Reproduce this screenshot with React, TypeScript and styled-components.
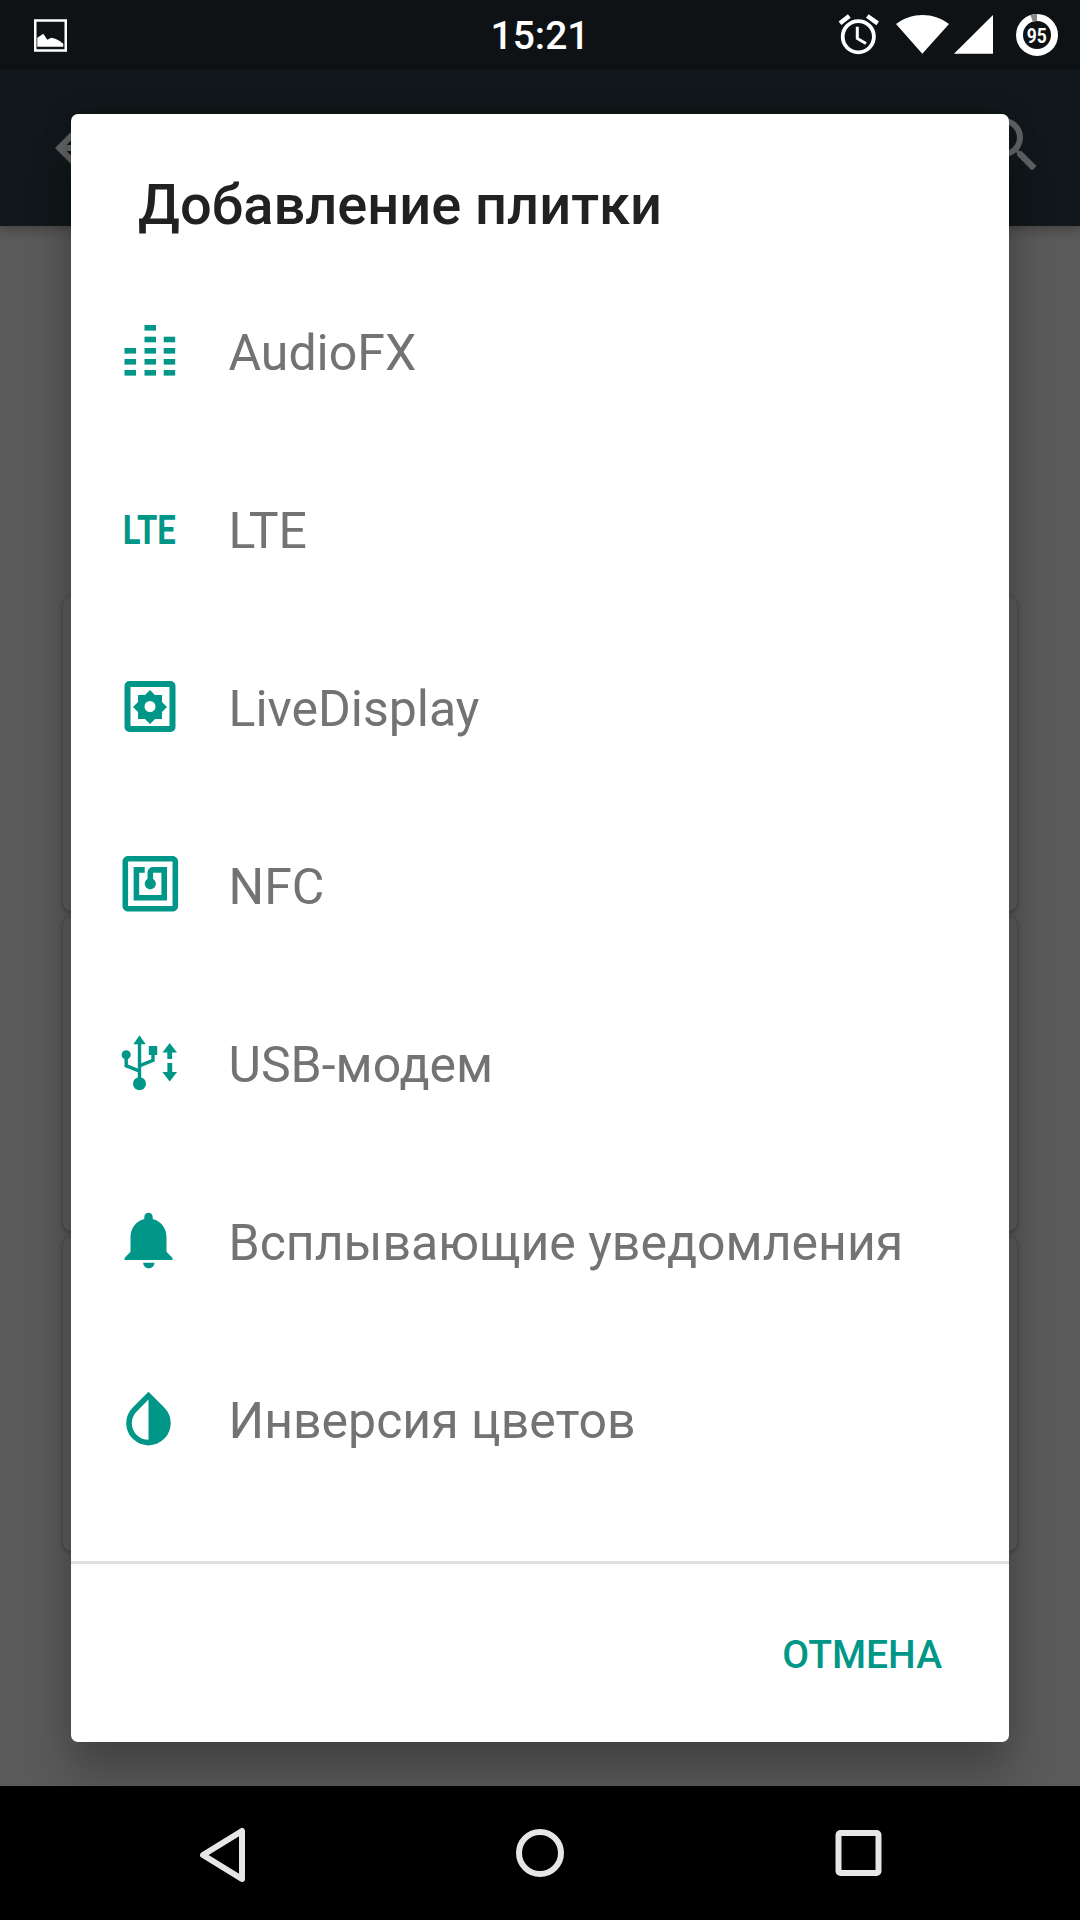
import React from "react";
import styled, { createGlobalStyle } from "styled-components";

const Global = createGlobalStyle`
  html, body { margin: 0; padding: 0; background: #000; }
  * { box-sizing: border-box; }
`;

const Screen = styled.div`
  position: relative;
  width: 1080px;
  height: 1920px;
  display: flex;
  flex-direction: column;
  overflow: hidden;
  font-family: Roboto, "Noto Sans", sans-serif;
  background: #5a5a5a;
`;

const StatusBar = styled.div`
  position: relative;
  height: 69px;
  flex: none;
  background: #0e1214;
  color: #fff;
`;

const StatusIcons = styled.svg`
  position: absolute;
  inset: 0;
  width: 1080px;
  height: 69px;
`;

const Clock = styled.div`
  position: absolute;
  left: 0;
  right: 0;
  top: 14px;
  text-align: center;
  font-size: 39px;
  line-height: 44px;
  font-weight: 500;
`;

const AppBar = styled.div`
  height: 157px;
  flex: none;
  display: flex;
  align-items: center;
  justify-content: space-between;
  padding: 0 33px 0 43px;
  background: #11171a;
  box-shadow: 0 4px 10px rgba(0, 0, 0, 0.25);
  position: relative;
`;

const BarIcon = styled.svg`
  width: 72px;
  height: 72px;
  fill: #5f6263;
  display: block;
`;

const Content = styled.div`
  flex: 1;
  min-height: 0;
  display: flex;
  flex-direction: column;
  gap: 6px;
  padding: 371px 63px 0;
`;

const Card = styled.div`
  height: 314px;
  flex: none;
  border-radius: 8px;
  background: #5b5b5b;
  box-shadow: 0 1px 4px rgba(0, 0, 0, 0.35);
`;

const NavBar = styled.div`
  height: 134px;
  flex: none;
  background: #000;
  position: relative;
  z-index: 3;
`;

const NavIcons = styled.svg`
  width: 1080px;
  height: 134px;
  display: block;
  fill: none;
  stroke: #e6e6e6;
  stroke-width: 6;
  stroke-linejoin: round;
`;

const Dialog = styled.div`
  position: absolute;
  left: 71px;
  top: 114px;
  width: 938px;
  height: 1628px;
  display: flex;
  flex-direction: column;
  background: #fff;
  border-radius: 7px;
  box-shadow: 0 36px 44px rgba(0, 0, 0, 0.22), 0 0 30px rgba(0, 0, 0, 0.12);
  z-index: 2;
`;

const Title = styled.div`
  height: 150px;
  flex: none;
  padding: 55px 0 0 67px;
  font-size: 56px;
  line-height: 72px;
  font-weight: 500;
  color: #212121;
`;

const List = styled.div`
  display: flex;
  flex-direction: column;
  flex: 1;
`;

const Row = styled.div`
  height: 178px;
  flex: none;
  display: flex;
  align-items: center;
  padding-left: 42.5px;
`;

const IconSlot = styled.div`
  width: 72px;
  height: 72px;
  flex: none;
  margin-right: 43px;
  display: flex;
  align-items: center;
  justify-content: center;
  color: #009688;
`;

const Glyph = styled.svg`
  width: 72px;
  height: 72px;
  display: block;
  fill: currentColor;
`;

const LteMark = styled.span`
  display: block;
  font-size: 40px;
  line-height: 72px;
  font-weight: 700;
  transform: scaleX(0.82);
`;

const Label = styled.div`
  font-size: 50px;
  line-height: 60px;
  color: #737373;
  white-space: nowrap;
`;

const Divider = styled.div`
  height: 3px;
  flex: none;
  background: #e0e0e0;
`;

const Footer = styled.div`
  height: 178px;
  flex: none;
  display: flex;
  align-items: flex-start;
  justify-content: flex-end;
  padding: 67px 67px 0 0;
`;

const CancelButton = styled.div`
  font-size: 39px;
  line-height: 48px;
  font-weight: 500;
  color: #009688;
`;

const eq: [number, number][] = [
  [10.5, 31], [10.5, 42], [10.5, 53],
  [30.5, 8], [30.5, 19.7], [30.5, 31], [30.5, 42], [30.5, 53],
  [49.7, 19.7], [49.7, 31], [49.7, 42], [49.7, 53],
];

const rows: { label: string; icon: React.ReactNode }[] = [
  {
    label: "AudioFX",
    icon: (
      <Glyph viewBox="0 0 72 72">
        {eq.map(([x, y]) => (
          <rect key={`${x}-${y}`} x={x} y={y} width="11.5" height="5.6" />
        ))}
      </Glyph>
    ),
  },
  { label: "LTE", icon: <LteMark>LTE</LteMark> },
  {
    label: "LiveDisplay",
    icon: (
      <Glyph viewBox="0 2.5 72 72">
        <path
          fillRule="evenodd"
          d="M15.5 10.5h41a5 5 0 0 1 5 5v41a5 5 0 0 1-5 5h-41a5 5 0 0 1-5-5v-41a5 5 0 0 1 5-5zm1 6v39h39v-39z"
        />
        <path
          fillRule="evenodd"
          d="M36 19.5l5 5h7l0 7 5 5-5 5v7h-7l-5 5-5-5h-7v-7l-5-5 5-5v-7h7zm0 11a5.5 5.5 0 1 0 0 11 5.5 5.5 0 0 0 0-11z"
        />
      </Glyph>
    ),
  },
  {
    label: "NFC",
    icon: (
      <Glyph viewBox="-1.06 0.2 25.9 25.9">
        <path d="M20 2H4c-1.1 0-2 .9-2 2v16c0 1.1.9 2 2 2h16c1.1 0 2-.9 2-2V4c0-1.1-.9-2-2-2zm0 18H4V4h16v16zM18 6h-5c-1.1 0-2 .9-2 2v2.28c-.6.35-1 .98-1 1.72 0 1.1.9 2 2 2s2-.9 2-2c0-.74-.4-1.38-1-1.72V8h3v8H8V8h2V6H6v12h12V6z" />
      </Glyph>
    ),
  },
  {
    label: "USB-модем",
    icon: (
      <Glyph viewBox="0 0 72 72">
        <path d="M25.5 6.3l6.2 9h-12.400z" />
        <path d="M23.8 15h3.4v35h-3.4z" />
        <circle cx="25.5" cy="54.7" r="6.5" />
        <circle cx="12.2" cy="25.8" r="4.6" />
        <path d="M10.5 28h3.4v7.6l13 5.2-1.2 3.2-15.2-6z" />
        <path d="M34.8 17h8.4v9h-8.4z" />
        <path d="M37.3 25h3.4v7.6l-14.2 5.6-1.2-3.2 12-4.7z" />
        <path d="M55.7 14l7.3 9.400h-4.9v6.6h-4.800v-6.600h-4.900z" />
        <path d="M53.400 34h4.800v9h4.900l-7.400 9.500-7.300-9.500h5z" />
      </Glyph>
    ),
  },
  {
    label: "Всплывающие уведомления",
    icon: (
      <Glyph viewBox="0 0 72 72">
        <path d="M34.5 5.700c2.400 0 4.200 1.800 4.200 4.200v2C47 14 52.500 21 52.500 30v14.700l6 6.300v2h-48v-2l6-6.300V30c0-9 5.500-16 13.800-18.100v-2c0-2.400 1.800-4.200 4.200-4.200zM29.200 55.700h11.300c0 3-2.500 5.600-5.650 5.600s-5.650-2.600-5.650-5.600z" />
      </Glyph>
    ),
  },
  {
    label: "Инверсия цветов",
    icon: (
      <Glyph viewBox="-0.41 -0.14 25.9 25.9">
        <path d="M17.66 7.93L12 2.27 6.34 7.93c-3.12 3.12-3.12 8.19 0 11.31C7.9 20.8 9.95 21.58 12 21.58c2.05 0 4.1-.78 5.66-2.34 3.12-3.12 3.12-8.19 0-11.31zM12 19.59c-1.6 0-3.11-.62-4.24-1.76C6.62 16.69 6 15.19 6 13.59s.62-3.11 1.76-4.24L12 5.1v14.49z" />
      </Glyph>
    ),
  },
];

export default function App() {
  return (
    <>
      <Global />
      <Screen>
        <StatusBar>
          <StatusIcons viewBox="0 0 1080 69">
            <path
              fill="#fff"
              fillRule="evenodd"
              d="M34 19.300h33v32.500H34zm2.500 2.500v27.500h28V21.800z"
            />
            <path
              fill="#fff"
              d="M37.300 46.700v-9l6-4 4 6 4-2 4 1 4 2 4 3v3z"
            />
            <g fill="none" stroke="#fff">
              <circle cx="858.300" cy="36.700" r="15.600" strokeWidth="3.800" />
              <path d="M857.300 26.700V38.500l8.700 5" strokeWidth="3" />
              <path d="M840 23.300l9.300-7.300M877.700 23.300l-10.400-7.300" strokeWidth="4.500" />
            </g>
            <path fill="#fff" d="M922.300 53.700L896 24c16-12 37-12 53 0z" />
            <path fill="#fff" d="M954 53.700h39V15z" />
            <circle cx="1037" cy="35" r="17.500" fill="none" stroke="#fff" strokeWidth="7" />
            <path d="M1037 17.500a17.500 17.500 0 0 0-5.400 .9" fill="none" stroke="#8a8a8a" strokeWidth="7" />
            <text
              x="1036.700"
              y="43"
              textAnchor="middle"
              fill="#fff"
              fontFamily="Roboto, sans-serif"
              fontWeight="700"
              fontSize="21"
              textLength={20}
              lengthAdjust="spacingAndGlyphs"
            >
              95
            </text>
          </StatusIcons>
          <Clock>15:21</Clock>
        </StatusBar>
        <AppBar>
          <BarIcon viewBox="0 0 24 24">
            <path d="M20 11H7.830l5.590-5.590L12 4l-8 8 8 8 1.410-1.410L7.830 13H20v-2z" />
          </BarIcon>
          <BarIcon viewBox="0 1 24 24">
            <path d="M15.500 14h-.79l-.28-.27C15.410 12.590 16 11.110 16 9.500 16 5.910 13.090 3 9.500 3S3 5.910 3 9.500 5.910 16 9.500 16c1.610 0 3.090-.59 4.230-1.570l.27.28v.79l5 4.990L20.490 19l-4.990-5zm-6 0C7.010 14 5 11.990 5 9.500S7.010 5 9.500 5 14 7.010 14 9.500 11.990 14 9.500 14z" />
          </BarIcon>
        </AppBar>
        <Content>
          <Card />
          <Card />
          <Card />
        </Content>
        <NavBar>
          <NavIcons viewBox="0 0 1080 134">
            <path d="M242 45v48l-39-24z" />
            <circle cx="540" cy="67" r="21" />
            <rect x="838.500" y="47" width="40" height="40" rx="2" />
          </NavIcons>
        </NavBar>
        <Dialog>
          <Title>Добавление плитки</Title>
          <List>
            {rows.map((r) => (
              <Row key={r.label}>
                <IconSlot>{r.icon}</IconSlot>
                <Label>{r.label}</Label>
              </Row>
            ))}
          </List>
          <Divider />
          <Footer>
            <CancelButton>ОТМЕНА</CancelButton>
          </Footer>
        </Dialog>
      </Screen>
    </>
  );
}
